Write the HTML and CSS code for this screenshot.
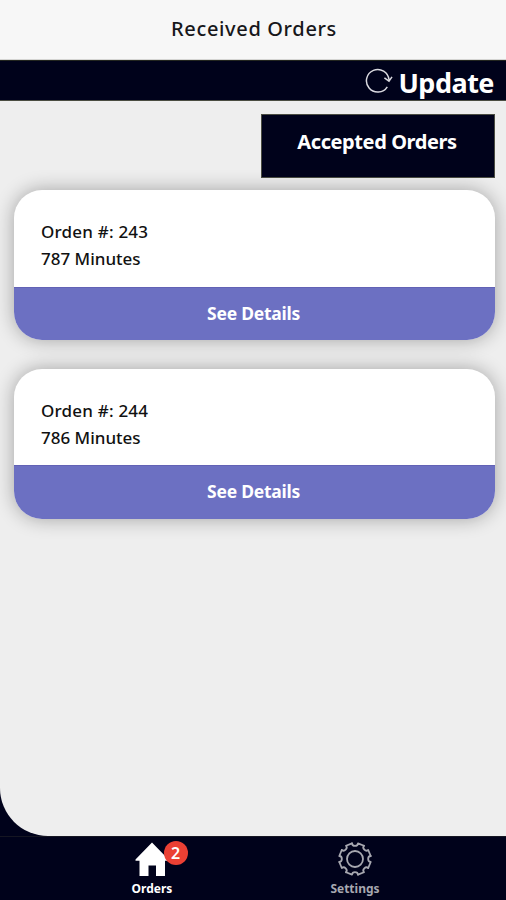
FILE: index.html
```html
<!DOCTYPE html>
<html lang="en">
<head>
<meta charset="utf-8">
<title>Received Orders</title>
<link rel="stylesheet" href="styles.css">
</head>
<body>
<header class="title-bar"><h1 class="title">Received Orders</h1></header>
<main class="content">
  <div class="update-bar">
    <svg class="refresh" viewBox="0 0 28 26" width="28" height="26">
      <path d="M22.3 18.8A11.3 11.3 0 1 1 24 11.8M19.4 9.8l4.6 3.3 3-4.2"/>
    </svg>
    <span class="update">Update</span>
  </div>
  <div class="actions"><button class="accepted"><span>Accepted Orders</span></button></div>
  <section class="orders">
    <article class="card">
      <div class="info"><p class="number">Orden #: 243</p><p class="minutes">787 Minutes</p></div>
      <button class="details"><span>See Details</span></button>
    </article>
    <article class="card">
      <div class="info"><p class="number">Orden #: 244</p><p class="minutes">786 Minutes</p></div>
      <button class="details"><span>See Details</span></button>
    </article>
  </section>
</main>
<nav class="tabs">
  <div class="tab active">
    <div class="icon">
      <svg viewBox="0 0 34 36" width="34" height="36">
        <path fill="#fff" d="M17 1.500 33.500 18.500v1.300H30V35H21V24.500H13.500V35H4.500V19.800H.5V18.500z"/>
      </svg>
      <span class="badge">2</span>
    </div>
    <span class="label">Orders</span>
  </div>
  <div class="tab">
    <div class="icon">
      <svg class="gear" viewBox="-18 -18 36 36" width="36" height="36">
        <defs><path id="tooth" d="M-3-15.700C-2.700-12.300 2.700-12.300 3-15.700L8.980-13.220"/></defs>
        <use href="#tooth"/>
        <use href="#tooth" transform="rotate(45)"/>
        <use href="#tooth" transform="rotate(90)"/>
        <use href="#tooth" transform="rotate(135)"/>
        <use href="#tooth" transform="rotate(180)"/>
        <use href="#tooth" transform="rotate(225)"/>
        <use href="#tooth" transform="rotate(270)"/>
        <use href="#tooth" transform="rotate(315)"/>
        <circle r="8"/>
      </svg>
    </div>
    <span class="label">Settings</span>
  </div>
</nav>
</body>
</html>
```

FILE: styles.css
```css
* { box-sizing: border-box; }
body {
  margin: 0;
  height: 900px;
  display: flex;
  flex-direction: column;
  overflow: hidden;
  background: #00021b;
  font-family: "Noto Sans", "Open Sans", sans-serif;
}
h1, p { margin: 0; }
button { border: 0; padding: 0; font-family: inherit; color: #fff; }
.title-bar {
  height: 60px;
  flex: none;
  display: flex;
  justify-content: center;
  align-items: center;
  background: #f7f7f7;
  border-bottom: 1px solid #d5d5d3;
}
.title { font-size: 20px; line-height: 28px; font-weight: 500; color: #17171b; letter-spacing: .65px; padding: 0 0 2px 2px; }
.content {
  height: 776px;
  flex: none;
  overflow: hidden;
  background: #eee;
  border-bottom-left-radius: 48px;
}
.update-bar {
  height: 41px;
  display: flex;
  justify-content: flex-end;
  align-items: center;
  padding: 5px 12px 0 0;
  background: #00021b;
  border-top: 1px solid #22251f;
  border-bottom: 1px solid #4b4d42;
}
.refresh { margin: 0 5px 4px 0; fill: none; stroke: #d9d9df; stroke-width: 1.5; }
.update { color: #fff; font-size: 27px; line-height: 36px; font-weight: 700; letter-spacing: -.5px; }
.actions { display: flex; justify-content: flex-end; padding: 13px 11px 0 0; }
.accepted {
  width: 234px;
  height: 64px;
  padding: 0 2px 10px 0;
  background: #00021b;
  border: 1px solid #4b4d42;
  font-size: 20px;
  font-weight: 700;
  letter-spacing: -.4px;
}
.orders { display: flex; flex-direction: column; gap: 28px; padding: 12px 11px 0 14px; }
.card {
  height: 150px;
  display: flex;
  flex-direction: column;
  overflow: hidden;
  border-radius: 28px;
  background: #fff;
  box-shadow: 0 0 19px rgba(0, 0, 0, .32);
}
.card + .card { margin-top: 1px; }
.info { flex: 1; padding: 28px 27px 0; color: #111; font-size: 17px; line-height: 27px; font-weight: 500; }
.number { letter-spacing: .2px; }
.details { height: 53px; padding: 0 2px 3px 0; background: #6c70c2; border-top: 1px solid #6262b5; font-size: 17.5px; font-weight: 700; letter-spacing: -.25px; }
.card + .card .details { height: 54px; }
.tabs { height: 64px; display: flex; padding: 0 50px; background: #00021b; border-top: 1px solid #151622; }
.tab { flex: 1; display: flex; flex-direction: column; align-items: center; color: #a7a8b0; }
.icon { position: relative; height: 42px; padding-top: 4px; }
.icon svg { display: block; }
.badge {
  position: absolute;
  top: 4px;
  left: 29px;
  width: 24px;
  height: 24px;
  border-radius: 50%;
  background: #eb4034;
  color: #fff;
  text-align: center;
  font-size: 16px;
  line-height: 24px;
  font-weight: 600;
}
.gear { fill: none; stroke: #a7a8b0; stroke-width: 1.8; stroke-linecap: round; stroke-linejoin: round; }
.label { font-size: 12px; line-height: 20px; font-weight: 700; padding-left: 1px; }
.active { color: #fff; }
```
